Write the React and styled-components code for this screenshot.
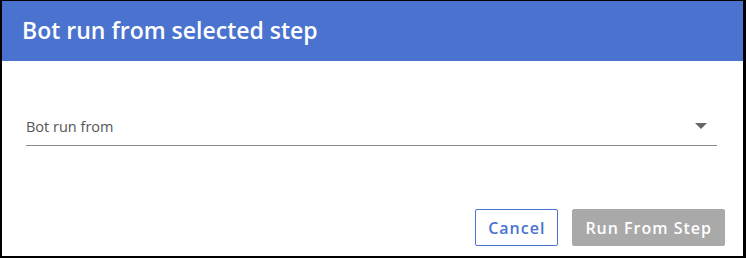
import React from "react";
import styled, { createGlobalStyle } from "styled-components";

const Global = createGlobalStyle`
  html, body {
    margin: 0;
    padding: 0;
    background: #000;
  }
  body {
    font-family: "Open Sans", "Noto Sans", sans-serif;
  }
`;

export default function App() {
  return (
    <>
      <Global />
      <Frame>
        <Dialog>
          <Header>
            <Title>Bot run from selected step</Title>
          </Header>
          <Body>
            <Select>
              <Label>Bot run from</Label>
              <Arrow />
            </Select>
          </Body>
          <Actions>
            <Button>Cancel</Button>
            <Button primary disabled>
              Run From Step
            </Button>
          </Actions>
        </Dialog>
      </Frame>
    </>
  );
}

const Frame = styled.div`
  width: 746px;
  height: 258px;
  box-sizing: border-box;
  padding: 1px 3px 2px 2px;
  background: #000;
`;
const Dialog = styled.div`
  height: 100%;
  background: #fff;
  display: flex;
  flex-direction: column;
`;
const Header = styled.div`
  height: 60px;
  background: #4a73cf;
  display: flex;
  align-items: center;
  padding: 0 20px;
`;
const Title = styled.h1`
  margin: 0;
  margin-top: -2px;
  font-size: 23px;
  font-weight: 600;
  color: #fff;
`;
const Body = styled.div`
  padding: 46px 26px 0 24px;
  flex: 1;
`;
const Select = styled.div`
  display: flex;
  align-items: center;
  justify-content: space-between;
  height: 38px;
  border-bottom: 1px solid #8a8a8a;
  padding-right: 10px;
`;
const Label = styled.span`
  font-size: 14.5px;
  color: #555;
  margin-top: 1px;
`;
const Arrow = styled.span`
  width: 0;
  height: 0;
  border-left: 6px solid transparent;
  border-right: 6px solid transparent;
  border-top: 6px solid #666;
`;
const Actions = styled.div`
  display: flex;
  justify-content: flex-end;
  gap: 14px;
  padding: 0 18px 10px 0;
`;
const Button = styled.button`
  height: 37px;
  box-sizing: border-box;
  padding: 0 12px;
  font-family: "Open Sans", "Noto Sans", sans-serif;
  font-size: 16px;
  font-weight: 600;
  letter-spacing: 1px;
  border-radius: 2px;
  border: 1px solid ${(p) => (p.primary ? "#a9a9a9" : "#4a73cf")};
  background: ${(p) => (p.primary ? "#a9a9a9" : "#fff")};
  color: ${(p) => (p.primary ? "#fff" : "#4a73cf")};
  cursor: pointer;
`;
